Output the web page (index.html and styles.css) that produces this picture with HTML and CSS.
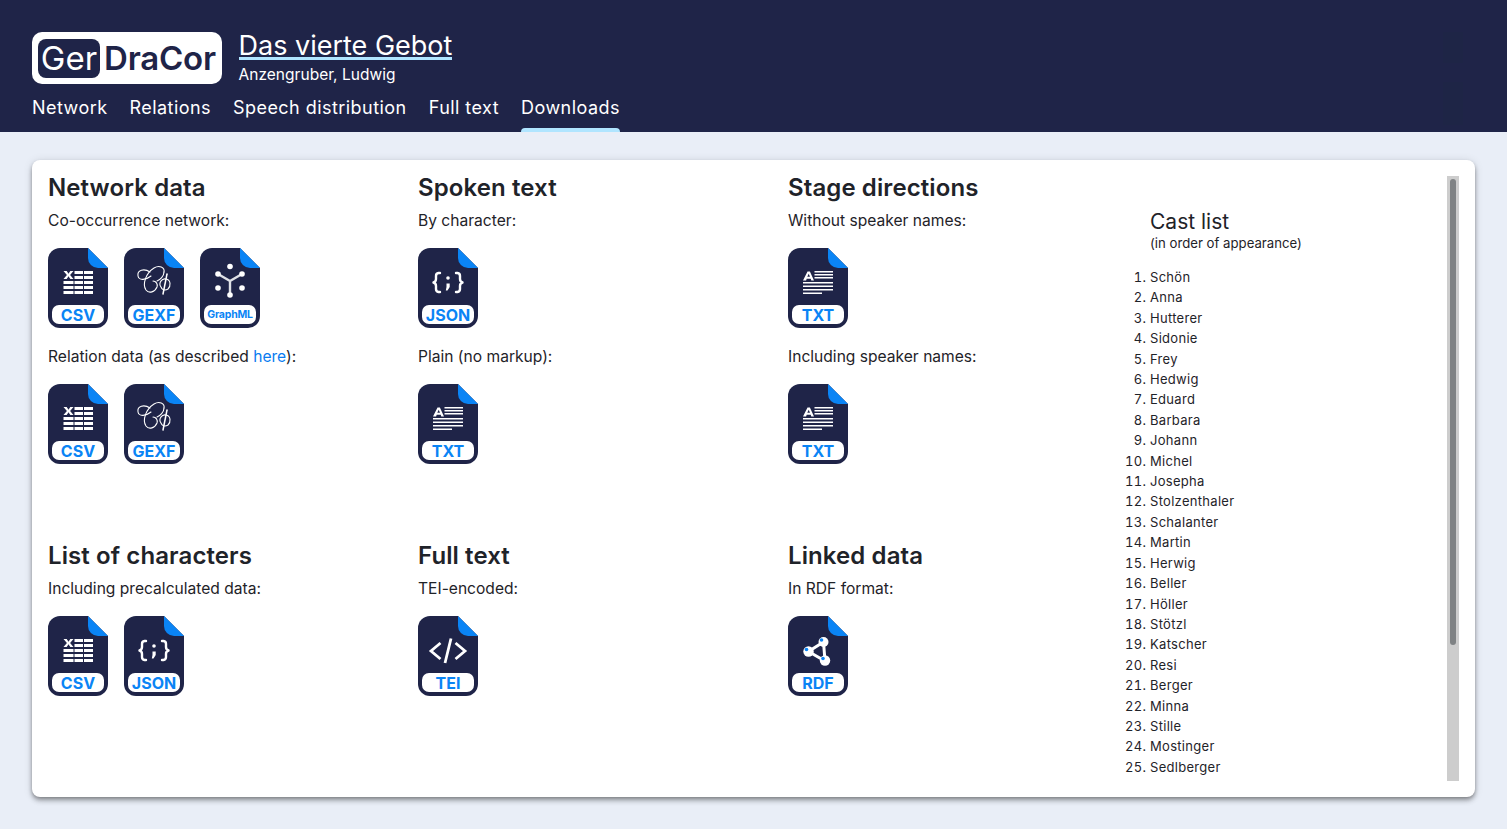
FILE: index.html
```html
<!DOCTYPE html>
<html lang="en">
<head>
<meta charset="utf-8">
<title>Das vierte Gebot - GerDraCor</title>
<link rel="stylesheet" href="styles.css">
</head>
<body>
<svg class="sprite" width="0" height="0" aria-hidden="true">
  <defs>
    <symbol id="file" viewBox="0 0 60 80">
      <path d="M12 0H40L60 20V68A12 12 0 0 1 48 80H12A12 12 0 0 1 0 68V12A12 12 0 0 1 12 0Z" fill="#1f2448"/>
      <path d="M40 0L60 20H50A10 10 0 0 1 40 10Z" fill="#0a84f5"/>
      <rect x="4" y="57" width="52" height="19" rx="7" fill="#fff"/>
    </symbol>
    <symbol id="g-csv" viewBox="0 0 60 80">
      <path d="M15.500 23h3.200l1.800 2.700L22.300 23h3.200l-3.400 4 3.400 4h-3.200l-1.800-2.700L18.700 31h-3.200l3.400-4z" fill="#fff"/>
      <path d="M26.500 23h8.500v3h-8.500zM36 23h9v3h-9zM26.500 28h8.500v3h-8.500zM36 28h9v3h-9zM15.500 33h10v3h-10zM26.500 33h8.500v3h-8.500zM36 33h9v3h-9zM15.500 38h10v3h-10zM26.500 38h8.500v3h-8.500zM36 38h9v3h-9zM15.500 43h10v3h-10zM26.500 43h8.500v3h-8.500zM36 43h9v3h-9z" fill="#fff"/>
    </symbol>
    <symbol id="g-gexf" viewBox="0 0 60 80">
      <g fill="none" stroke="#fff" stroke-width="1.100" stroke-linecap="round">
        <path d="M40 24C41 19 35 17 30 20C22 25 18 36 22 42C25 46 31 44 33 39C34 36 32 33 29 33"/>
        <path d="M26 24C20 20 13 22 14 28C15 33 22 32 27 28"/>
        <path d="M40 24C40 28 36 32 33 33"/>
        <path d="M37 39C34 35 38 30 42 31C47 32 47 38 44 41C41 43 38 42 37 39Z"/>
        <path d="M43 26L39 46" stroke-width="1.500"/>
      </g>
    </symbol>
    <symbol id="g-graphml" viewBox="0 0 60 80">
      <path d="M30 33L18 26M30 33L42 26M30 33V47" stroke="#dfe1e6" stroke-width="2.400" fill="none"/>
      <g fill="#fff">
        <circle cx="30" cy="18.500" r="2.800"/><circle cx="18" cy="26" r="2.800"/><circle cx="42" cy="26" r="2.800"/>
        <circle cx="18" cy="40" r="2.800"/><circle cx="42" cy="40" r="2.800"/><circle cx="30" cy="47" r="2.800"/>
      </g>
    </symbol>
    <symbol id="g-json" viewBox="0 0 60 80">
      <g fill="none" stroke="#fff" stroke-width="2.400" stroke-linecap="round" stroke-linejoin="round">
        <path d="M22 25H20.500A3 3 0 0 0 18 28V31C18 33 17 34 15.500 34.500C17 35 18 36 18 38V41A3 3 0 0 0 20.500 44H22"/>
        <path d="M38 25H39.500A3 3 0 0 1 42 28V31C42 33 43 34 44.500 34.500C43 35 42 36 42 38V41A3 3 0 0 1 39.500 44H38"/>
      </g>
      <circle cx="30" cy="30" r="1.800" fill="#fff"/>
      <path d="M28.500 35.500h3.200V39L29.500 42.500H27.800L28.500 39Z" fill="#fff"/>
    </symbol>
    <symbol id="g-txt" viewBox="0 0 60 80">
      <path d="M15 32.500L19.500 23.500h2.400L26 32.500h-2.700l-.6-1.700h-4l-.6 1.700ZM19.300 28.800h2.700L20.700 25.800Z" fill="#fff"/>
      <path d="M26.500 23h18.500v1.600H26.500zM26.500 26h18.500v1.600H26.500zM26.500 29h18.500v1.600H26.500zM15 34h30v1.600H15zM15 37.500h30v1.600H15zM15 41h30v1.600H15zM15 44.500h19v1.600H15z" fill="#fff"/>
    </symbol>
    <symbol id="g-tei" viewBox="0 0 60 80">
      <path d="M22.500 27L13 35L22.500 43M37.500 27L47 35L37.500 43M33 22.500L27 47" fill="none" stroke="#fff" stroke-width="2.800"/>
    </symbol>
    <symbol id="g-rdf" viewBox="0 0 60 80">
      <path d="M35.500 26L20.500 35.500L37 45Z" fill="none" stroke="#fff" stroke-width="3"/>
      <circle cx="35.500" cy="26" r="5" fill="#fff"/><circle cx="20.500" cy="35.500" r="5.200" fill="#fff"/><circle cx="37" cy="44.500" r="5.200" fill="#fff"/>
      <circle cx="33.500" cy="24" r="1.800" fill="#0a84f5"/><circle cx="18.500" cy="33.500" r="1.800" fill="#0a84f5"/><circle cx="35" cy="42.500" r="1.800" fill="#0a84f5"/>
    </symbol>
  </defs>
</svg>

<header class="site-header">
  <div class="brand-row">
    <a class="logo" href="#"><span class="logo-ger">Ger</span><span class="logo-dracor">DraCor</span></a>
    <div class="play-title">
      <h1 class="play-name"><a href="#">Das vierte Gebot</a></h1>
      <div class="play-author">Anzengruber, Ludwig</div>
    </div>
  </div>
  <nav class="tabs">
    <a class="tab" href="#">Network</a>
    <a class="tab" href="#">Relations</a>
    <a class="tab" href="#">Speech distribution</a>
    <a class="tab" href="#">Full text</a>
    <a class="tab tab-active" href="#">Downloads</a>
  </nav>
</header>

<main class="content">
  <section class="card">
    <div class="downloads">
      <div class="group group-top">
        <h2>Network data</h2>
        <p>Co-occurrence network:</p>
        <div class="files">
          <a class="file" href="#"><svg class="ico"><use href="#file"/></svg><svg class="ico over"><use href="#g-csv"/></svg><span class="lbl">CSV</span></a>
          <a class="file" href="#"><svg class="ico"><use href="#file"/></svg><svg class="ico over"><use href="#g-gexf"/></svg><span class="lbl">GEXF</span></a>
          <a class="file" href="#"><svg class="ico"><use href="#file"/></svg><svg class="ico over"><use href="#g-graphml"/></svg><span class="lbl lbl-small">GraphML</span></a>
        </div>
        <p>Relation data (as described <a class="link" href="#">here</a>):</p>
        <div class="files">
          <a class="file" href="#"><svg class="ico"><use href="#file"/></svg><svg class="ico over"><use href="#g-csv"/></svg><span class="lbl">CSV</span></a>
          <a class="file" href="#"><svg class="ico"><use href="#file"/></svg><svg class="ico over"><use href="#g-gexf"/></svg><span class="lbl">GEXF</span></a>
        </div>
      </div>
      <div class="group group-top">
        <h2>Spoken text</h2>
        <p>By character:</p>
        <div class="files">
          <a class="file" href="#"><svg class="ico"><use href="#file"/></svg><svg class="ico over"><use href="#g-json"/></svg><span class="lbl">JSON</span></a>
        </div>
        <p>Plain (no markup):</p>
        <div class="files">
          <a class="file" href="#"><svg class="ico"><use href="#file"/></svg><svg class="ico over"><use href="#g-txt"/></svg><span class="lbl">TXT</span></a>
        </div>
      </div>
      <div class="group group-top">
        <h2>Stage directions</h2>
        <p>Without speaker names:</p>
        <div class="files">
          <a class="file" href="#"><svg class="ico"><use href="#file"/></svg><svg class="ico over"><use href="#g-txt"/></svg><span class="lbl">TXT</span></a>
        </div>
        <p>Including speaker names:</p>
        <div class="files">
          <a class="file" href="#"><svg class="ico"><use href="#file"/></svg><svg class="ico over"><use href="#g-txt"/></svg><span class="lbl">TXT</span></a>
        </div>
      </div>
      <div class="group">
        <h2>List of characters</h2>
        <p>Including precalculated data:</p>
        <div class="files">
          <a class="file" href="#"><svg class="ico"><use href="#file"/></svg><svg class="ico over"><use href="#g-csv"/></svg><span class="lbl">CSV</span></a>
          <a class="file" href="#"><svg class="ico"><use href="#file"/></svg><svg class="ico over"><use href="#g-json"/></svg><span class="lbl">JSON</span></a>
        </div>
      </div>
      <div class="group">
        <h2>Full text</h2>
        <p>TEI-encoded:</p>
        <div class="files">
          <a class="file" href="#"><svg class="ico"><use href="#file"/></svg><svg class="ico over"><use href="#g-tei"/></svg><span class="lbl">TEI</span></a>
        </div>
      </div>
      <div class="group">
        <h2>Linked data</h2>
        <p>In RDF format:</p>
        <div class="files">
          <a class="file" href="#"><svg class="ico"><use href="#file"/></svg><svg class="ico over"><use href="#g-rdf"/></svg><span class="lbl">RDF</span></a>
        </div>
      </div>
    </div>
    <aside class="cast">
      <h3>Cast list</h3>
      <div class="cast-note">(in order of appearance)</div>
      <ol class="cast-list">
        <li>Schön</li><li>Anna</li><li>Hutterer</li><li>Sidonie</li><li>Frey</li>
        <li>Hedwig</li><li>Eduard</li><li>Barbara</li><li>Johann</li><li>Michel</li>
        <li>Josepha</li><li>Stolzenthaler</li><li>Schalanter</li><li>Martin</li><li>Herwig</li>
        <li>Beller</li><li>Höller</li><li>Stötzl</li><li>Katscher</li><li>Resi</li>
        <li>Berger</li><li>Minna</li><li>Stille</li><li>Mostinger</li><li>Sedlberger</li>
      </ol>
    </aside>
    <div class="scroll-track"><div class="scroll-thumb"></div></div>
  </section>
</main>
</body>
</html>
```
FILE: styles.css
```css
* { box-sizing: border-box; }
html, body { margin: 0; height: 100%; }
body {
  background: #e9eef7;
  color: #1f2329;
  font-family: Inter, "Noto Sans", sans-serif;
  overflow: hidden;
}
a { color: inherit; text-decoration: none; }
.sprite { position: absolute; }

.site-header {
  height: 132px;
  padding: 32px 32px 0;
  color: #fff;
  background:
    linear-gradient(#1e2546, #1e2546) 1443px 32px / 20px 31px no-repeat,
    linear-gradient(#1e2546, #1e2546) 1443px 82px / 20px 43px no-repeat,
    #1f2448;
}
.brand-row { display: flex; gap: 16.500px; height: 52px; }
.logo {
  display: flex;
  align-items: center;
  width: 190px;
  height: 52px;
  padding: 0 6px;
  background: #fff;
  border-radius: 10px;
  font-size: 33px;
  line-height: 1;
}
.logo-ger {
  display: block;
  background: #1f2448;
  color: #fff;
  width: 62px;
  height: 39px;
  line-height: 39px;
  text-align: center;
  border-radius: 8px;
}
.logo-dracor {
  color: #1f2448;
  font-weight: 600;
  margin-left: 4px;
  letter-spacing: -.2px;
}
.play-name { margin: 0; font-size: 27px; font-weight: 400; line-height: 28px; height: 28px; }
.play-name a { display: block; width: fit-content; border-bottom: 3px solid #b0e5ff; height: 28px; }
.play-author { font-size: 15.500px; line-height: 20px; margin-top: 5px; letter-spacing: .03px; }
.tabs { display: flex; gap: 22px; margin-top: 8px; }
.tab {
  position: relative;
  display: block;
  height: 40px;
  font-size: 18px;
  line-height: 32px;
  letter-spacing: .45px;
}
.tab-active::after {
  content: "";
  position: absolute;
  left: 0;
  right: 0;
  bottom: 0;
  height: 4px;
  background: #b0e5ff;
  border-radius: 4px 4px 0 0;
}

.content { padding: 28px 32px; }
.card {
  position: relative;
  display: flex;
  height: 637px;
  padding: 16px;
  background: #fff;
  border-radius: 8px;
  box-shadow: 0 2px 4px -1px rgba(0, 0, 0, .35), 0 4px 5px rgba(0, 0, 0, .2), 0 1px 10px rgba(0, 0, 0, .12);
}
.downloads {
  display: grid;
  grid-template-columns: 370px 370px auto;
  grid-template-rows: 368px auto;
  width: 1074px;
  flex: none;
}
h2 { margin: 0; font-size: 24px; line-height: 24px; font-weight: 600; letter-spacing: .1px; }
.group p { margin: 0; font-size: 15.600px; line-height: 26px; }
.group h2 + p { margin-top: 8px; }
.link { color: #0a7cf0; }
.files { display: flex; gap: 16px; margin-top: 14px; height: 96px; padding-bottom: 16px; }
.file { position: relative; display: block; width: 60px; height: 80px; }
.ico { display: block; width: 60px; height: 80px; }
.over { position: absolute; inset: 0; }
.lbl {
  position: absolute;
  left: 4px;
  right: 4px;
  top: 57px;
  height: 20px;
  line-height: 20px;
  text-align: center;
  color: #0a84f5;
  font-weight: 700;
  font-size: 16px;
}
.lbl-small { font-size: 10.500px; letter-spacing: -.2px; }

.cast {
  flex: 1;
  height: 605px;
  overflow: hidden;
  padding: 34px 0 0 28px;
}
.cast h3 { margin: 0; font-size: 21px; line-height: 24px; font-weight: 400; }
.cast-note { font-size: 13.200px; line-height: 20px; margin-top: -1px; }
.cast-list { margin: 14px 0 0; padding: 0; font-size: 13px; line-height: 20.400px; letter-spacing: .3px; }

.scroll-track {
  position: absolute;
  top: 16px;
  right: 16px;
  bottom: 16px;
  width: 12px;
  padding: 3px;
  background: #cdcdcd;
}
.scroll-thumb { width: 6px; height: 466px; background: #7f8284; border-radius: 3px; }
```
